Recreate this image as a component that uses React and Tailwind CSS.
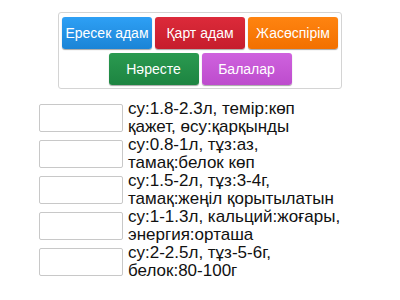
import React from 'react';

const buttons = [
  [
    { label: 'Ересек адам', cls: 'from-[#2ea0f5] to-[#1b84d6]' },
    { label: 'Қарт адам', cls: 'from-[#dc2a3a] to-[#c61d2c]' },
    { label: 'Жасөспірім', cls: 'from-[#ff8410] to-[#f27000]' },
  ],
  [
    { label: 'Нәресте', cls: 'from-[#2a9a50] to-[#1d8441]' },
    { label: 'Балалар', cls: 'from-[#cf62de] to-[#bd4ccd]' },
  ],
];

const items = [
  ['су:1.8-2.3л, темір:көп', 'қажет, өсу:қарқынды'],
  ['су:0.8-1л, тұз:аз,', 'тамақ:белок көп'],
  ['су:1.5-2л, тұз:3-4г,', 'тамақ:жеңіл қорытылатын'],
  ['су:1-1.3л, кальций:жоғары,', 'энергия:орташа'],
  ['су:2-2.5л, тұз-5-6г,', 'белок:80-100г'],
];

export default function App() {
  return (
    <div className="w-[400px] h-[300px] bg-white overflow-hidden font-['Liberation_Sans',Arial,sans-serif]">
      {/* Word tiles */}
      <div className="pt-3 flex justify-center">
        <div className="w-[284px] border border-[#d4d4d4] rounded-[3px] px-[3px] pt-1 pb-[3px] flex flex-col gap-1">
          {buttons.map((row, i) => (
            <div key={i} className="flex justify-center gap-[3px]">
              {row.map((b) => (
                <div
                  key={b.label}
                  className={`w-[90px] h-[32px] rounded-[3px] bg-gradient-to-b ${b.cls} shadow-[0_1px_1px_rgba(0,0,0,0.35)] flex items-center justify-center text-white text-[14px]`}
                >
                  {b.label}
                </div>
              ))}
            </div>
          ))}
        </div>
      </div>

      {/* Drop targets */}
      <div className="mt-[11px] pl-[39px] flex flex-col">
        {items.map((lines, i) => (
          <div key={i} className="h-[36px] flex items-center gap-[5px]">
            <div className="w-[84px] h-[28px] border border-[#c8c8c8] rounded-[2px] bg-white shrink-0" />
            <div className="text-[17px] leading-[18px] text-[#111] whitespace-nowrap">
              <div>{lines[0]}</div>
              <div>{lines[1]}</div>
            </div>
          </div>
        ))}
      </div>
    </div>
  );
}
